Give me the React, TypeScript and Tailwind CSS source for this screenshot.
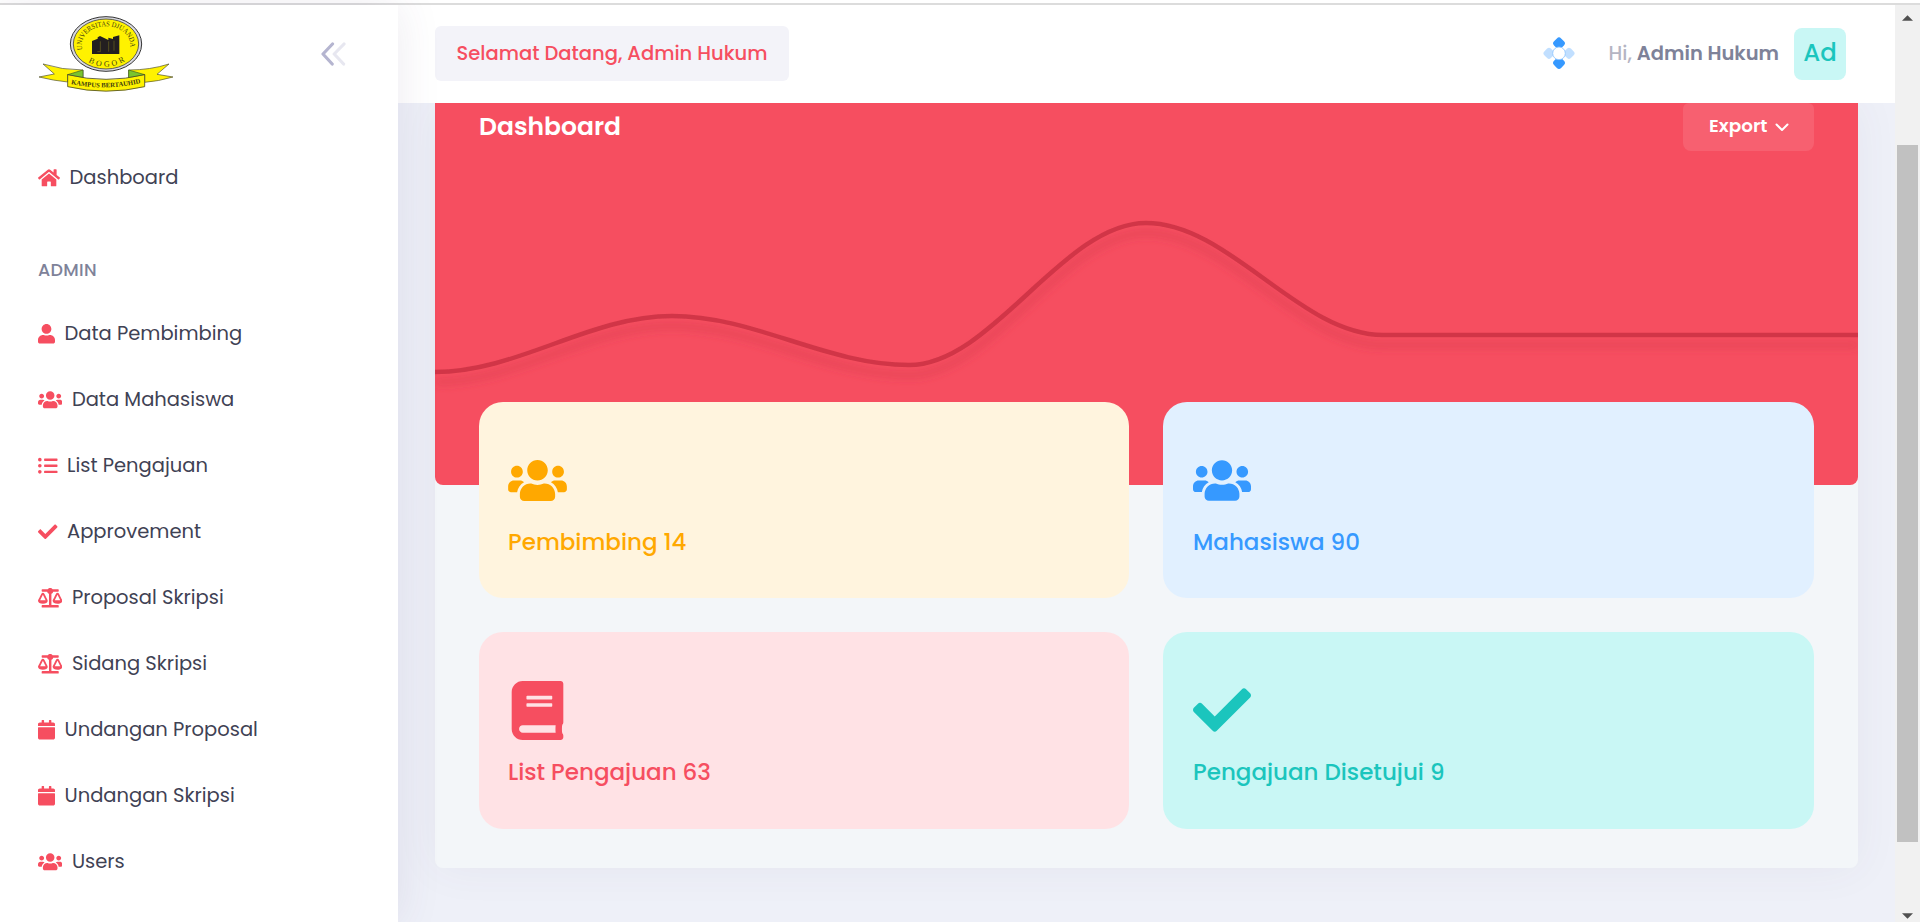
import type { IconType } from 'react-icons';
import {
  FaBalanceScale,
  FaBook,
  FaCalendar,
  FaCheck,
  FaHome,
  FaListUl,
  FaUser,
  FaUsers,
} from 'react-icons/fa';

type NavItem = { label: string; icon: IconType; width: string };

const NAV: NavItem[] = [
  { label: 'Data Pembimbing', icon: FaUser, width: 'w-[17px]' },
  { label: 'Data Mahasiswa', icon: FaUsers, width: 'w-[24.4px]' },
  { label: 'List Pengajuan', icon: FaListUl, width: 'w-[19.5px]' },
  { label: 'Approvement', icon: FaCheck, width: 'w-[19.5px]' },
  { label: 'Proposal Skripsi', icon: FaBalanceScale, width: 'w-[24.4px]' },
  { label: 'Sidang Skripsi', icon: FaBalanceScale, width: 'w-[24.4px]' },
  { label: 'Undangan Proposal', icon: FaCalendar, width: 'w-[17px]' },
  { label: 'Undangan Skripsi', icon: FaCalendar, width: 'w-[17px]' },
  { label: 'Users', icon: FaUsers, width: 'w-[24.4px]' },
];

type Stat = { label: string; icon: IconType; tone: string; iconSize: string };

const STATS: Stat[] = [
  { label: 'Pembimbing 14', icon: FaUsers, tone: 'pl-[29px] bg-[#fff4de] text-[#ffa800]', iconSize: 'w-[59px] h-[47px]' },
  { label: 'Mahasiswa 90', icon: FaUsers, tone: 'pl-[30px] bg-[#e1f0ff] text-[#3699ff]', iconSize: 'w-[58px] h-[47px]' },
  { label: 'List Pengajuan 63', icon: FaBook, tone: 'pl-[29px] bg-[#ffe2e5] text-[#f64e60]', iconSize: 'w-[59px] h-[59px]' },
  { label: 'Pengajuan Disetujui 9', icon: FaCheck, tone: 'pl-[30px] bg-[#c9f7f5] text-[#1bc5bd]', iconSize: 'w-[58px] h-[58px]' },
];

function Logo() {
  return (
    <svg viewBox="110 40 414 236" className="h-[78.67px] w-[138px]" role="img">
      <g fill="#fff200" stroke="#4a4a2a" strokeWidth="2" strokeLinejoin="round">
        <path d="M128 190 Q185 208 248 208 L248 236 L202 222 L202 244 Q160 240 116 229 L162 220 Z" />
        <path d="M506 190 Q450 208 385 208 L385 236 L433 222 L433 245 Q474 242 518 229 L470 221 Z" />
      </g>
      <path d="M202 222 L248 208 V233 L215 226 Z" fill="#7ac42e" stroke="#3c5a1e" strokeWidth="2" />
      <path d="M433 222 L385 208 V233 L420 226 Z" fill="#7ac42e" stroke="#3c5a1e" strokeWidth="2" />
      <path
        d="M202 222 Q317 250 433 222 V258 Q317 285 202 258 Z"
        fill="#fff200"
        stroke="#4a4a2a"
        strokeWidth="2.5"
      />
      <ellipse cx="317" cy="130" rx="107" ry="82" fill="#d8d8e0" stroke="#333" strokeWidth="3" />
      <ellipse cx="317" cy="130" rx="98" ry="75" fill="#fff200" stroke="#444" strokeWidth="2.5" />
      <path
        d="M275 121 L292 114 V110 L299 106 L324 118 V111 L338 115 V109 L357 104 V160 H275 Z"
        fill="#231f20"
      />
      <path d="M300 122 V153 H291 M325 153 V122 M341 120 V150" stroke="#8c8420" strokeWidth="1.4" fill="none" />
      <path id="seal-top" d="M246 147 A73 57 0 1 1 388 147" fill="none" />
      <path id="seal-bottom" d="M264 184 Q317 214 374 181" fill="none" />
      <path id="seal-ribbon" d="M212 250 Q317 272 425 246" fill="none" />
      <g fill="#3d3a10" className="font-['Liberation_Serif',serif]">
        <text fontSize="22">
          <textPath href="#seal-top" textLength="224" lengthAdjust="spacingAndGlyphs">UNIVERSITAS DJUANDA</textPath>
        </text>
        <text fontSize="24">
          <textPath href="#seal-bottom" textLength="116">BOGOR</textPath>
        </text>
        <text fontSize="20" className="font-bold">
          <textPath href="#seal-ribbon" textLength="211" lengthAdjust="spacingAndGlyphs">KAMPUS BERTAUHID</textPath>
        </text>
      </g>
    </svg>
  );
}

function CollapseIcon() {
  return (
    <svg viewBox="0 0 25 24" className="h-6 w-[25px]" fill="none" stroke="#b5b5d0" strokeWidth="3.2" strokeLinecap="round" strokeLinejoin="round">
      <path d="M11.5 2 L2 12 L11.2 22" />
      <path d="M23 2 L13.2 12 L22.6 22" opacity="0.32" />
    </svg>
  );
}

function QuickIcon() {
  return (
    <svg viewBox="0 0 96 98" className="mb-0.5 h-[32.67px] w-8" fill="#3699ff">
      <g opacity="0.3">
        <rect x="4" y="35" width="28" height="28" rx="8" transform="rotate(45 18 49)" />
        <rect x="64" y="35" width="28" height="28" rx="8" transform="rotate(45 78 49)" />
      </g>
      <rect x="33" y="4" width="30" height="30" rx="9" transform="rotate(45 48 19)" />
      <rect x="33" y="63" width="30" height="30" rx="9" transform="rotate(45 48 78)" />
      <circle cx="48" cy="49" r="19" fill="#fff" stroke="#8cc4ff" strokeWidth="2.5" />
    </svg>
  );
}

function Sidebar() {
  return (
    <aside className="relative z-10 flex w-[398px] shrink-0 flex-col bg-white shadow-[0_0_42px_rgba(82,63,105,0.1)]">
      <div className="flex h-[98px] items-start justify-between pl-[37px] pr-[52px]">
        <div className="pt-[8.5px]">
          <Logo />
        </div>
        <div className="pt-[36.5px]">
          <CollapseIcon />
        </div>
      </div>
      <nav className="flex flex-col pl-[38px] pt-[42px] text-[19.5px] text-[#3f4254]">
        <a className="flex h-[66px] items-center gap-[9.5px]">
          <FaHome className="h-[19.5px] w-[22px] text-[#f64e60]" />
          <span>Dashboard</span>
        </a>
        <h4 className="flex h-[90px] items-center pt-[28px] text-[17.55px] font-medium tracking-[0.3px] text-[#7e8299]">
          ADMIN
        </h4>
        {NAV.map(({ label, icon: Icon, width }) => (
          <a key={label} className="flex h-[66px] items-center gap-[9.5px]">
            <Icon className={`h-[19.5px] text-[#f64e60] ${width}`} />
            <span>{label}</span>
          </a>
        ))}
      </nav>
    </aside>
  );
}

function Header() {
  return (
    <header className="flex h-[98px] shrink-0 items-center justify-between bg-white pl-[37px] pr-[49px]">
      <div className="mb-px flex h-[55px] w-[354px] items-center rounded-md bg-[#f3f3f9] pl-[21.5px] text-[19.5px] font-medium whitespace-nowrap text-[#f64e60]">
        Selamat Datang, Admin Hukum
      </div>
      <div className="flex items-center text-[19.5px]">
        <QuickIcon />
        <span className="ml-[34px] font-medium text-[#b5b5c3]">Hi,</span>
        <span className="ml-[5px] font-semibold text-[#7e8299]">Admin Hukum</span>
        <div className="ml-[15px] flex h-[52px] w-[52px] items-center justify-center rounded-lg bg-[#c9f7f5] pb-0.5 text-[24.4px] font-medium text-[#1bc5bd]">
          Ad
        </div>
      </div>
    </header>
  );
}

function TrendLine() {
  return (
    <svg viewBox="0 0 1423 200" className="block h-[200px] w-[1423px]" fill="none">
      <defs>
        <filter id="line-shadow" x="-2%" y="-10%" width="104%" height="130%">
          <feDropShadow dx="0" dy="10" stdDeviation="4" floodColor="#d13647" floodOpacity="0.55" />
        </filter>
      </defs>
      <path
        d="M0 171C83 171 154 115 237 115C320 115 391 164 474 164C557 164 628 22 711 22C794 22 865 134 948 134H1423"
        stroke="#d13647"
        strokeWidth="4.5"
        filter="url(#line-shadow)"
      />
    </svg>
  );
}

function DashboardCard() {
  return (
    <section className="mx-[37px] h-[765px] w-[1423px] rounded-b-lg bg-[#f3f6f9] shadow-[0_0_45px_rgba(82,63,105,0.06)]">
      <div className="h-[382px] rounded-b-lg bg-[#f64e60] text-white">
        <div className="flex h-12 items-center justify-between px-11">
          <h3 className="text-[25px] font-semibold">Dashboard</h3>
          <button className="flex h-12 w-[131px] items-center rounded-lg rounded-t-md bg-white/10 pb-0.5 pl-[26px] text-[18.4px] font-semibold">
            Export
            <svg viewBox="0 0 14 9" className="mt-0.5 ml-2 h-[9px] w-[14px]" fill="none" stroke="currentColor" strokeWidth="2" strokeLinecap="round" strokeLinejoin="round">
              <path d="M1.5 1.5 L7 7 L12.5 1.5" />
            </svg>
          </button>
        </div>
        <div className="pt-[50px]">
          <TrendLine />
        </div>
      </div>
      <div className="relative -mt-[83px] grid grid-cols-[650px_651px] grid-rows-[196px_197px] gap-[34px] px-11">
        {STATS.map(({ label, icon: Icon, tone, iconSize }) => (
          <div key={label} className={`rounded-[24px] pt-[48px] ${tone}`}>
            <div className="flex h-[60px] items-center">
              <Icon className={iconSize} />
            </div>
            <div className="mt-[14px] text-[23px] leading-[36px] font-medium">{label}</div>
          </div>
        ))}
      </div>
    </section>
  );
}

function Scrollbar() {
  return (
    <div className="flex w-[25px] shrink-0 flex-col items-center bg-[#f1f1f1]">
      <svg viewBox="0 0 12 6" className="mt-[10px] h-[6px] w-[11px]" fill="#505050">
        <path d="M0 6 L6 0 L12 6 Z" />
      </svg>
      <div className="mt-[124px] h-[697px] w-[21px] bg-[#c1c1c1]" />
      <svg viewBox="0 0 12 6" className="mt-[71px] h-[6px] w-[11px]" fill="#505050">
        <path d="M0 0 L6 6 L12 0 Z" />
      </svg>
    </div>
  );
}

export default function App() {
  return (
    <div className="flex h-[922px] w-[1920px] flex-col overflow-hidden bg-white font-['Poppins','Inter',sans-serif]">
      <div className="h-[5px] shrink-0 border-b-2 border-[#dcdcdc] bg-white" />
      <div className="flex h-[917px]">
        <Sidebar />
        <main className="flex w-[1497px] shrink-0 flex-col overflow-hidden bg-[#eef0f8]">
          <Header />
          <div className="flex-1 overflow-hidden">
            <DashboardCard />
          </div>
        </main>
        <Scrollbar />
      </div>
    </div>
  );
}
